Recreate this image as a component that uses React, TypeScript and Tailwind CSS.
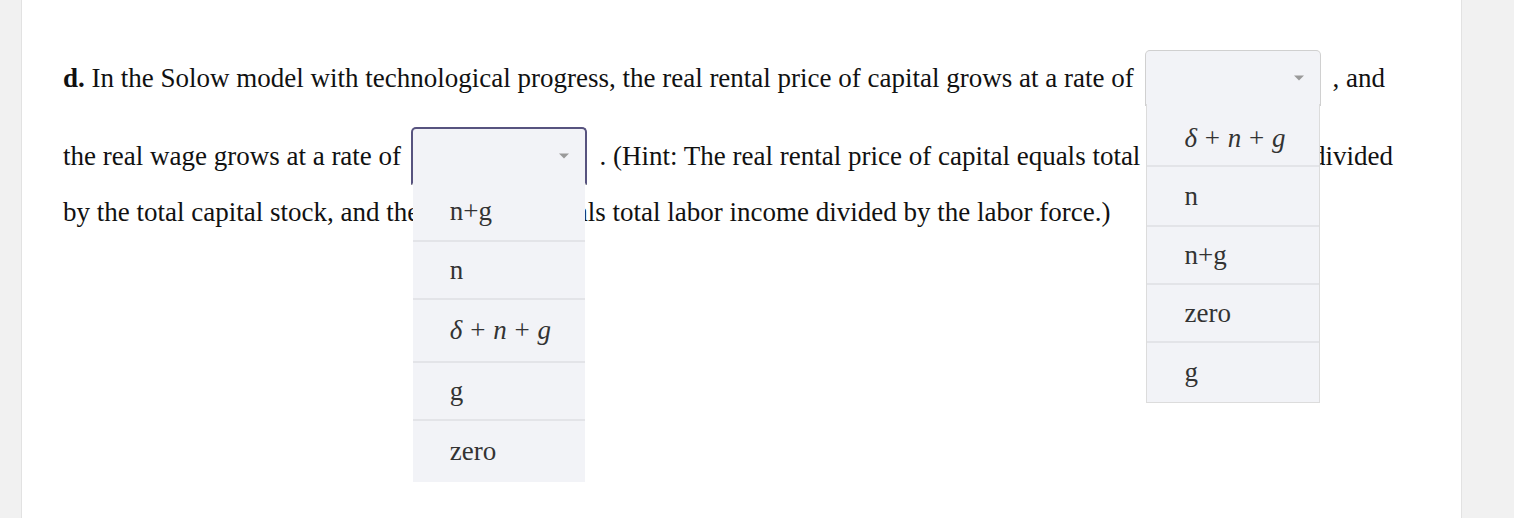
import React from 'react';

type Opt = { label: string; math?: boolean; h: string };

const Caret = () => (
    <span className="absolute right-[16px] top-1/2 -translate-y-1/2 w-0 h-0 border-l-[5px] border-r-[5px] border-t-[5px] border-l-transparent border-r-transparent border-t-[#9a9a9a]" />
);

const DeltaSum = () => (
    <span className="text-[#333]">
        <i>δ</i> <span className="mx-[1px]">+</span> <i>n</i> <span className="mx-[1px]">+</span> <i>g</i>
    </span>
);

const Menu: React.FC<{ options: Opt[]; bordered?: boolean }> = ({ options, bordered }) => (
    <div className={`absolute left-0 top-full w-full bg-[#f2f3f7] z-10 ${bordered ? 'border border-t-0 border-[#dcdcdc]' : ''}`}>
        {options.map((o, i) => (
            <div
                key={i}
                className={`${o.h} flex items-center pl-[37px] text-[#333] ${i < options.length - 1 ? 'border-b-2 border-[#e3e4e8]' : ''}`}
            >
                {o.math ? <DeltaSum /> : o.label}
            </div>
        ))}
    </div>
);

const Dropdown: React.FC<{ focused?: boolean; options: Opt[]; bordered?: boolean; className?: string }> = ({ focused, options, bordered, className }) => (
    <span className={`relative inline-block shrink-0 w-[176px] bg-[#f2f3f7] rounded-t-[5px] ${focused ? 'h-[58px] border-2 border-[#57537f] border-b-[#c8c8c8]' : 'h-[56px] border border-[#d0d0d0] border-b-2 border-b-[#d0d0d0]'} ${className ?? ''}`}>
        <Caret />
        <Menu options={options} bordered={bordered} />
    </span>
);

export default function App() {
    const rightOpts: Opt[] = [
        { label: 'δ+n+g', math: true, h: 'h-[63px] pt-[8px]' },
        { label: 'n', h: 'h-[60px]' },
        { label: 'n+g', h: 'h-[58px]' },
        { label: 'zero', h: 'h-[58px]' },
        { label: 'g', h: 'h-[59px]' },
    ];
    const leftOpts: Opt[] = [
        { label: 'n+g', h: 'h-[59px]' },
        { label: 'n', h: 'h-[58px]' },
        { label: 'δ+n+g', math: true, h: 'h-[63px]' },
        { label: 'g', h: 'h-[58px]' },
        { label: 'zero', h: 'h-[61px]' },
    ];

    return (
        <div className="flex w-[1514px] h-[518px] bg-[#f1f1f1] overflow-hidden" style={{ fontFamily: '"Liberation Serif", "Times New Roman", serif' }}>
            <div className="w-[21px] shrink-0" />
            <div className="w-[1441px] shrink-0 bg-white border-l border-[#e2e2e2] border-r pl-[41px] pt-[50px] text-[27px] text-[#111]">
                <div className="flex items-center h-[56px] whitespace-pre">
                    <span><b>d.</b> In the Solow model with technological progress, the real rental price of capital grows at a rate of </span>
                    <Dropdown options={rightOpts} bordered className="ml-[5px] mr-[11px]" />
                    <span className="relative z-0">, and</span>
                </div>
                <div className="flex items-center h-[58px] mt-[21px] whitespace-pre">
                    <span>the real wage grows at a rate of </span>
                    <Dropdown focused options={leftOpts} className="ml-[3px] mr-[6px]" />
                    <span> . (Hint: The real rental price of capital equals total capital income divided</span>
                </div>
                <div className="flex items-center h-[55px] whitespace-pre">
                    <span>by the total capital stock, and the real wage equals total labor income divided by the labor force.)</span>
                </div>
            </div>
            <div className="flex-1" />
        </div>
    );
}
